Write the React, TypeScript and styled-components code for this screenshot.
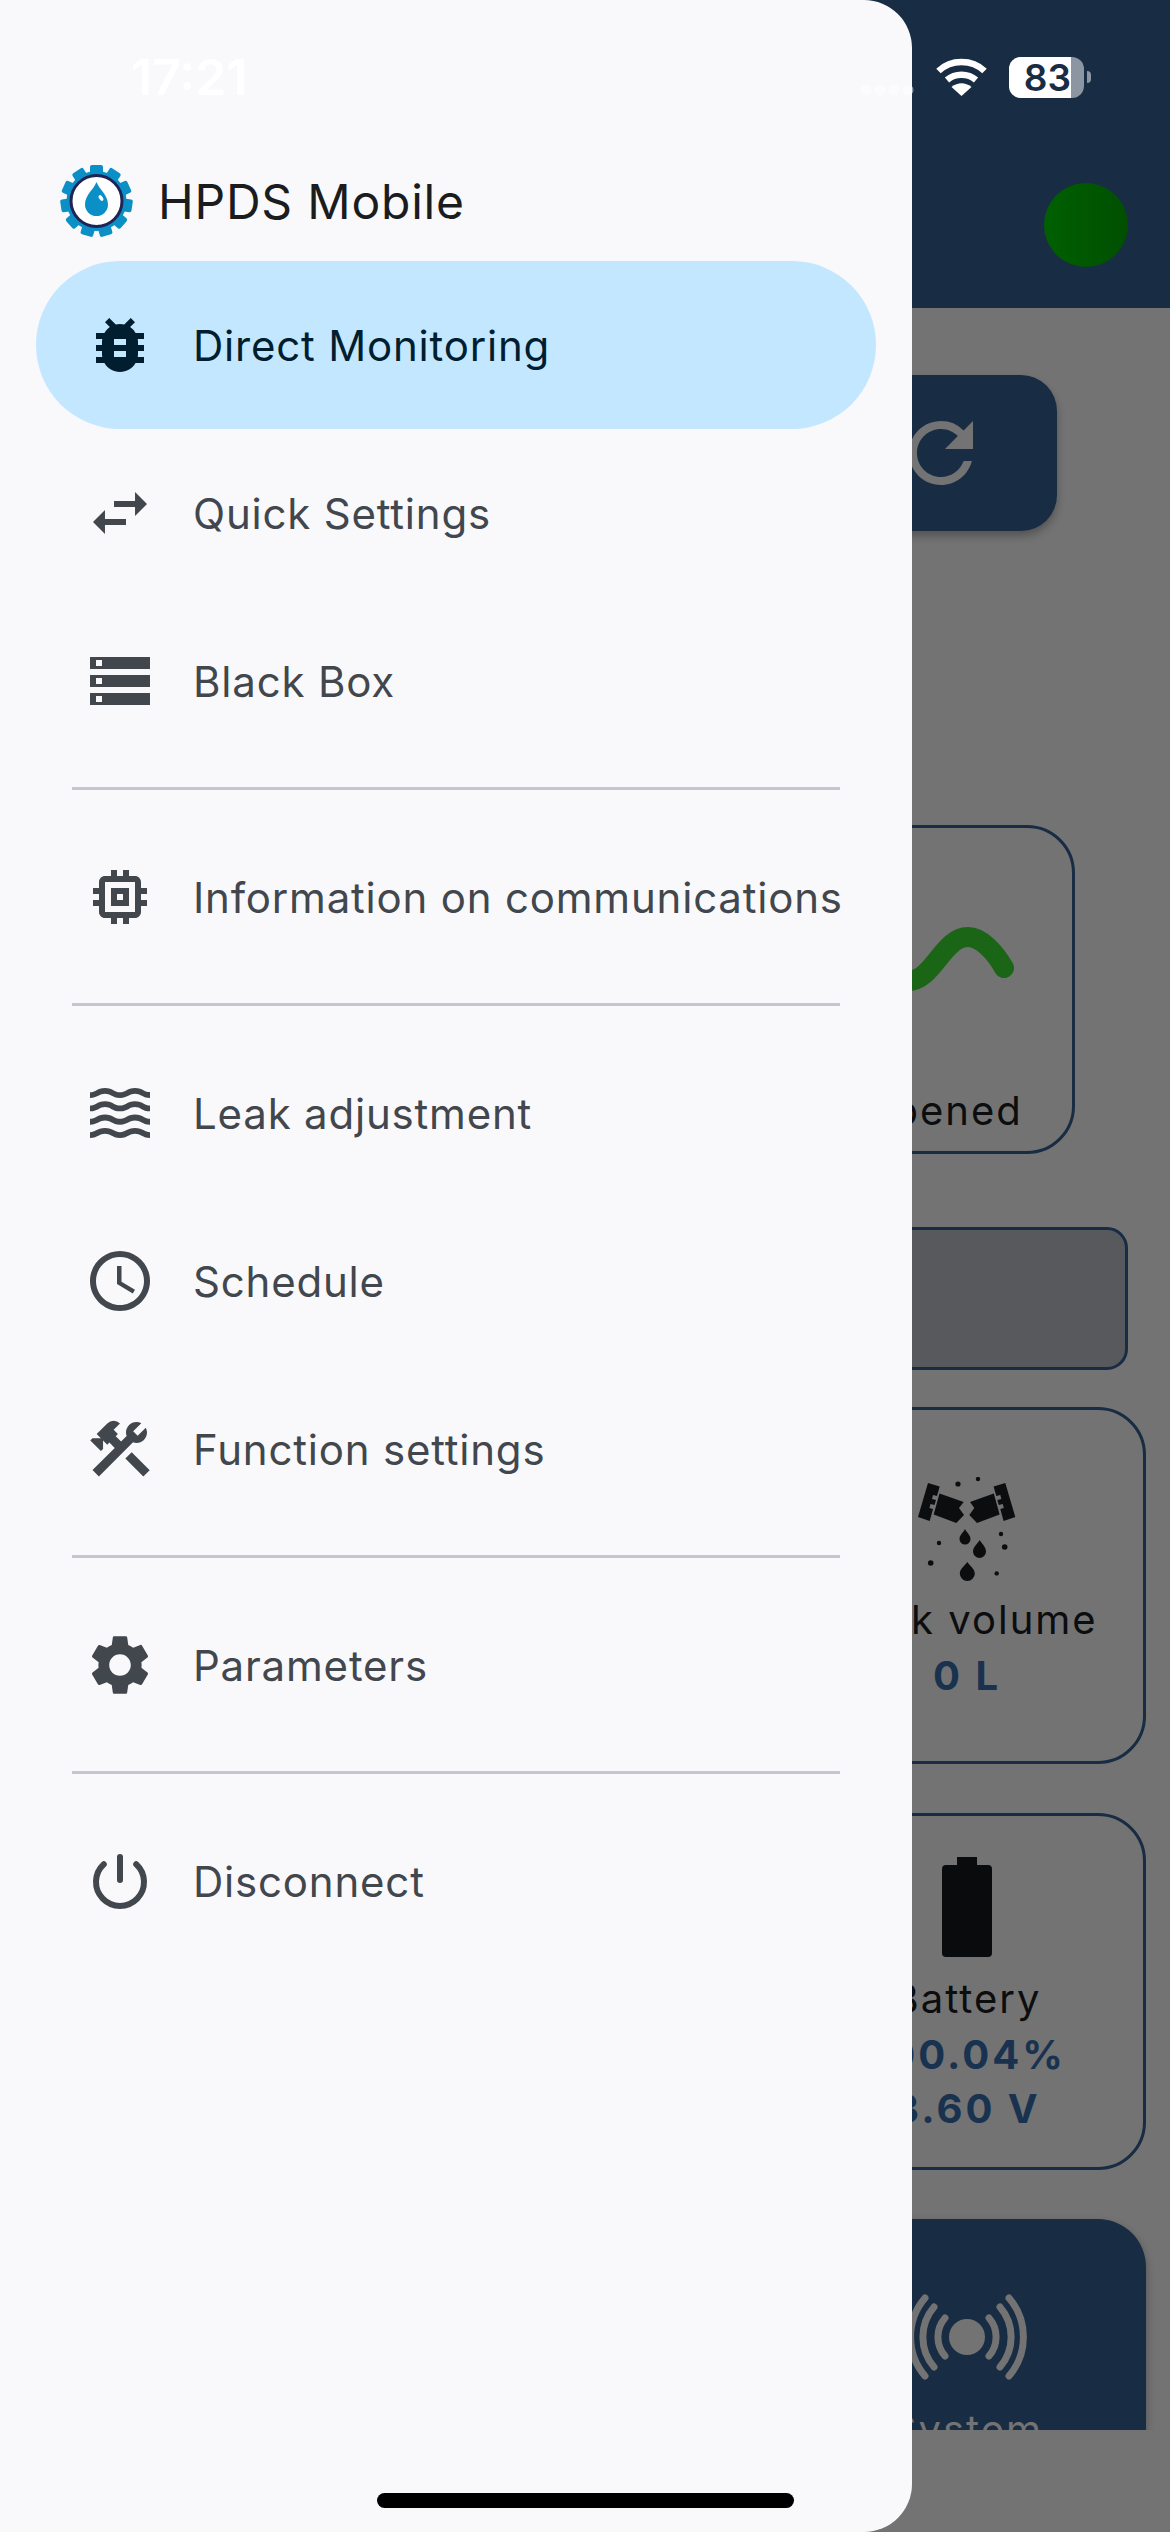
import * as React from 'react';
import styled, { createGlobalStyle } from 'styled-components';
import {
    MdBugReport,
    MdSwapHoriz,
    MdStorage,
    MdOutlineMemory,
    MdWaves,
    MdAccessTime,
    MdConstruction,
    MdSettings,
    MdRefresh,
} from 'react-icons/md';

const NAVY = '#182c44';
const SCRIM = '#737373';
const FONT = 'Inter, "Noto Sans", "Liberation Sans", sans-serif';

const GlobalStyle = createGlobalStyle`
  html, body {
    margin: 0;
    padding: 0;
    background: ${SCRIM};
  }
  * {
    box-sizing: border-box;
  }
`;

const Screen = styled.div`
  position: relative;
  width: 1170px;
  height: 2532px;
  overflow: hidden;
  background: ${SCRIM};
  font-family: ${FONT};
`;

/* page behind the drawer */

const Header = styled.header`
  height: 308px;
  background: ${NAVY};
  display: flex;
  justify-content: flex-end;
  padding: 183px 42px 0 0;
`;

const Dot = styled.div`
  width: 84px;
  height: 84px;
  border-radius: 50%;
  background: linear-gradient(90deg, #006000, #004f00);
`;

const Content = styled.main`
  height: 2122px;
  overflow: hidden;
  display: flex;
  flex-direction: column;
  align-items: flex-end;

  > * {
    flex-shrink: 0;
  }
`;

const RefreshButton = styled.div`
  margin: 67px 113px 0 0;
  width: 340px;
  height: 156px;
  border-radius: 36px;
  background: ${NAVY};
  box-shadow: 0 5px 8px rgba(0, 0, 0, 0.28);
  color: ${SCRIM};
  display: flex;
  align-items: center;
  justify-content: flex-end;
  padding-right: 68px;
`;

const Card = styled.div<{ $width: number; $right: number; $top: number; $height: number }>`
  width: ${p => p.$width}px;
  height: ${p => p.$height}px;
  margin: ${p => p.$top}px ${p => p.$right}px 0 0;
  border: 3px solid ${NAVY};
  border-radius: 48px;
  display: flex;
  flex-direction: column;
  align-items: center;
  color: #0c0d0f;
`;

const ValveCard = styled(Card)`
  padding-top: 92px;
`;

const LeakCard = styled(Card)`
  padding-top: 67px;
`;

const BatteryCard = styled(Card)`
  padding-top: 41px;
`;

const StatusBar = styled.div`
  width: 500px;
  height: 143px;
  margin: 73px 42px 0 0;
  border: 3px solid ${NAVY};
  border-radius: 21px;
  background: #58595d;
`;

const SystemCard = styled.div`
  width: 358px;
  height: 300px;
  margin: 49px 24px 0 0;
  border-radius: 48px 48px 0 0;
  background: ${NAVY};
  box-shadow: 0 4px 8px rgba(0, 0, 0, 0.3);
  color: ${SCRIM};
  display: flex;
  flex-direction: column;
  align-items: center;
  padding-top: 73px;
`;

const CardLabel = styled.div<{ $gap?: number }>`
  font-size: 40px;
  line-height: 48px;
  letter-spacing: 2px;
  margin: ${p => p.$gap || 0}px 0 5px;
  white-space: nowrap;
`;

const CardValue = styled.div`
  font-size: 40px;
  line-height: 54px;
  font-weight: 700;
  letter-spacing: 3px;
  color: #18324f;
  white-space: nowrap;
`;

/* drawer */

const Drawer = styled.aside`
  position: absolute;
  left: 0;
  top: 0;
  bottom: 0;
  width: 912px;
  background: #f9f9fc;
  border-radius: 0 48px 48px 0;
  display: flex;
  flex-direction: column;
  align-items: stretch;
  padding-top: 165px;
`;

const Brand = styled.div`
  display: flex;
  align-items: center;
  height: 72px;
  margin: 0 0 24px 60px;
  gap: 25px;
  color: #1a1c1e;
  font-size: 48px;
  letter-spacing: 0.8px;
  line-height: 72px;
`;

const BrandTitle = styled.span`
  padding-top: 2px;
`;

const NavItem = styled.div<{ $active?: boolean }>`
  display: flex;
  align-items: center;
  height: 168px;
  margin: 0 36px;
  padding-left: 48px;
  gap: 37px;
  border-radius: 84px;
  background: ${p => (p.$active ? '#c3e7ff' : 'transparent')};
  color: ${p => (p.$active ? '#001e2f' : '#42474e')};
  font-size: 42px;
  letter-spacing: 0.8px;
  white-space: nowrap;

  svg {
    flex-shrink: 0;
  }
`;

const Divider = styled.hr`
  height: 3px;
  border: 0;
  margin: 22px 72px 23px;
  background: #c5c6d0;
`;

const TopBar = styled.div`
  position: absolute;
  left: 0;
  right: 0;
  top: 0;
  height: 154px;
  display: flex;
  align-items: center;
  color: #fff;
  padding: 0 79px 0 131px;
`;

const Clock = styled.div`
  font-size: 50px;
  font-weight: 600;
  margin-right: auto;
`;

const Signal = styled.svg`
  margin-right: 22px;
`;

const Wifi = styled.svg`
  margin-right: 22px;
`;

const BatteryPill = styled.div`
  width: 75px;
  height: 41px;
  border-radius: 12px;
  background: #8c96a2;
`;

const BatteryFill = styled.div`
  width: 62px;
  height: 100%;
  border-radius: 12px 0 0 12px;
  background: #fff;
  color: ${NAVY};
  font-size: 37px;
  font-weight: 600;
  line-height: 41px;
  display: flex;
  justify-content: flex-end;
`;

const BatteryNub = styled.div`
  width: 4px;
  height: 12px;
  margin-left: 3px;
  border-radius: 0 4px 4px 0;
  background: #8c96a2;
`;

const HomeBar = styled.div`
  position: absolute;
  left: 377px;
  bottom: 24px;
  width: 417px;
  height: 15px;
  border-radius: 8px;
  background: #000;
`;

const Logo = () => {
    const teeth = Array.from({ length: 11 }, (_, i) => i * (360 / 11));
    return (
        <svg width="73" height="72" viewBox="0 0 73 72">
            {teeth.map(a => (
                <rect key={a} x="30" y="0" width="13" height="14" rx="2" fill="#0a8fc6" transform={`rotate(${a} 36.5 36)`} />
            ))}
            <circle cx="36.5" cy="36" r="30" fill="#0a8fc6" />
            <circle cx="36.5" cy="36" r="25.5" fill="#fff" stroke="#1f2355" strokeWidth="3" />
            <path d="M36.5 17 C39 24 48 30 48 39.5 A11.5 11.5 0 0 1 25 39.5 C25 30 34 24 36.5 17Z" fill="#0a8fc6" />
            <ellipse cx="41" cy="33" rx="1.8" ry="3.2" fill="#fff" transform="rotate(-35 41 33)" />
        </svg>
    );
};

const PowerIcon = () => (
    <svg width="72" height="72" viewBox="0 0 24 24" fill="none" stroke="currentColor" strokeWidth="2" strokeLinecap="round">
        <path d="M12 4V11.7" />
        <path d="M6.6 6.4A8 8 0 1 0 17.4 6.4" />
    </svg>
);

const WaveLine = () => (
    <svg width="264" height="80" viewBox="0 0 264 80" fill="none">
        <path
            d="M33 20C63 20 113 61 158 61C183 61 193 17 218 17C231 17 245 32 254 48"
            stroke="#1b6516"
            strokeWidth="20"
            strokeLinecap="round"
        />
    </svg>
);

const LeakIcon = () => (
    <svg width="98" height="104" viewBox="0 0 98 104" fill="#0c0d0f">
        <path d="M10 6L21.7 9.6L19 19L15 18L14 22L18 23L16.5 28L12.5 27L11.5 31L15 32L11.7 44L0 40Z" />
        <path d="M21.5 16.5L45.7 25L41 31L46 38L38.3 46L15.7 37.5Z" />
        <path d="M87.3 6L75.6 9.6L78.3 19L82.3 18L83.3 22L79.3 23L80.8 28L84.8 27L85.8 31L82.3 32L85.6 44L97.3 40Z" />
        <path d="M75.8 16.5L52 25L56.3 31L51.3 38L59 46L81.6 37.5Z" />
        <path d="M47 52C49 56 52.5 58 52.5 62A5.5 5.5 0 0 1 41.5 62C41.5 58 45 56 47 52Z" />
        <path d="M61.7 63C64 67 68 70 68 74.5A6.5 6.5 0 0 1 55 74.5C55 70 59.4 67 61.7 63Z" />
        <path d="M49.3 85C52 89 56.8 92 56.8 96.5A7.5 7.5 0 0 1 41.8 96.5C41.8 92 46.6 89 49.3 85Z" />
        <circle cx="40" cy="7" r="2.6" />
        <circle cx="60" cy="2" r="2.2" />
        <circle cx="21" cy="66" r="2.2" />
        <circle cx="83" cy="57" r="2.2" />
        <circle cx="86.7" cy="70" r="2.8" />
        <circle cx="12.7" cy="86" r="2.8" />
        <circle cx="78.7" cy="96.4" r="2.2" />
    </svg>
);

const BatteryIcon = () => (
    <svg width="50" height="101" viewBox="0 0 50 101" fill="#0a0b0d">
        <rect x="15" y="0" width="20" height="10" />
        <rect x="0" y="8" width="50" height="92" rx="4" />
    </svg>
);

const RadioIcon = () => (
    <svg width="130" height="90" viewBox="-65 -45 130 90" fill="none" stroke="currentColor" strokeWidth="7" strokeLinecap="round">
        <circle cx="0" cy="0" r="18" fill="currentColor" stroke="none" />
        <path d="M22 -19A29 29 0 0 1 22 19M-22 -19A29 29 0 0 0 -22 19" />
        <path d="M33 -30A46 46 0 0 1 33 30M-33 -30A46 46 0 0 0 -33 30" />
        <path d="M42 -39A60 60 0 0 1 42 39M-42 -39A60 60 0 0 0 -42 39" />
    </svg>
);

const items: Array<Array<{ label: string; icon: JSX.Element; active?: boolean }>> = [
    [
        { label: 'Direct Monitoring', icon: <MdBugReport size={72} />, active: true },
        { label: 'Quick Settings', icon: <MdSwapHoriz size={72} /> },
        { label: 'Black Box', icon: <MdStorage size={72} /> },
    ],
    [{ label: 'Information on communications', icon: <MdOutlineMemory size={72} /> }],
    [
        { label: 'Leak adjustment', icon: <MdWaves size={72} /> },
        { label: 'Schedule', icon: <MdAccessTime size={72} /> },
        { label: 'Function settings', icon: <MdConstruction size={72} /> },
    ],
    [{ label: 'Parameters', icon: <MdSettings size={72} /> }],
    [{ label: 'Disconnect', icon: <PowerIcon /> }],
];

export default function App(): JSX.Element {
    return (
        <Screen>
            <GlobalStyle />
            <Header>
                <Dot />
            </Header>
            <Content>
                <RefreshButton>
                    <MdRefresh size={96} />
                </RefreshButton>
                <ValveCard $width={386} $right={95} $top={294} $height={329}>
                    <WaveLine />
                    <CardLabel $gap={87}>Valve opened</CardLabel>
                </ValveCard>
                <StatusBar />
                <LeakCard $width={358} $right={24} $top={37} $height={357}>
                    <LeakIcon />
                    <CardLabel $gap={15}>Leak volume</CardLabel>
                    <CardValue>0 L</CardValue>
                </LeakCard>
                <BatteryCard $width={358} $right={24} $top={49} $height={357}>
                    <BatteryIcon />
                    <CardLabel $gap={17}>Battery</CardLabel>
                    <CardValue>100.04%</CardValue>
                    <CardValue>3.60 V</CardValue>
                </BatteryCard>
                <SystemCard>
                    <RadioIcon />
                    <CardLabel $gap={24}>System</CardLabel>
                </SystemCard>
            </Content>
            <Drawer>
                <Brand>
                    <Logo />
                    <BrandTitle>HPDS Mobile</BrandTitle>
                </Brand>
                {items.map((group, i) => (
                    <React.Fragment key={i}>
                        {i > 0 && <Divider />}
                        {group.map(item => (
                            <NavItem key={item.label} $active={item.active}>
                                {item.icon}
                                {item.label}
                            </NavItem>
                        ))}
                    </React.Fragment>
                ))}
            </Drawer>
            <TopBar>
                <Clock>17:21</Clock>
                <Signal width="54" height="38" viewBox="0 0 54 38" fill="rgba(255,255,255,0.5)">
                    <circle cx="6" cy="32" r="5.5" />
                    <circle cx="20" cy="32" r="5.5" />
                    <circle cx="34" cy="32" r="5.5" />
                    <circle cx="48" cy="32" r="5.5" />
                </Signal>
                <Wifi width="51" height="38" viewBox="0 0 51 38" fill="none" stroke="#fff" strokeWidth="6.5">
                    <path d="M2.5 13C15 1 36 1 48.5 13" />
                    <path d="M11 22C19 15 32 15 40 22" />
                    <path d="M25.5 38L15.5 29C22 24 29 24 35.5 29Z" fill="#fff" stroke="none" />
                </Wifi>
                <BatteryPill>
                    <BatteryFill>83</BatteryFill>
                </BatteryPill>
                <BatteryNub />
            </TopBar>
            <HomeBar />
        </Screen>
    );
}
